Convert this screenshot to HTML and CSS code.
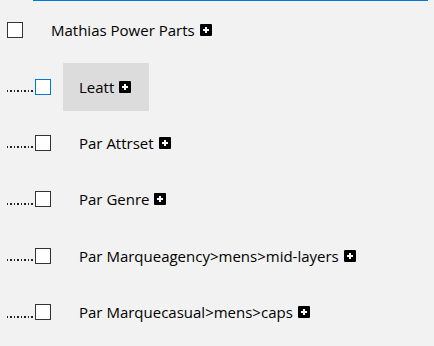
FILE: index.html
```html
<!DOCTYPE html>
<html lang="en">
  <head>
    <meta charset="UTF-8" />
    <meta name="viewport" content="width=device-width, initial-scale=1.0" />
    <title>Catégories</title>
    <link rel="stylesheet" href="styles.css">
  </head>
  <body>
    <div class="topline"></div>
    <ul class="tree">
      <li class="row">
        <span class="box"></span>
        <span class="label">Mathias Power Parts <svg class="plus" viewBox="0 0 12 12"><rect width="12" height="12" rx="1"/><path d="M6 3v6M3 6h6"/></svg></span>
      </li>
      <li class="row">
        <span class="dots"></span>
        <span class="box focus"></span>
        <span class="label hover">Leatt <svg class="plus" viewBox="0 0 12 12"><rect width="12" height="12" rx="1"/><path d="M6 3v6M3 6h6"/></svg></span>
      </li>
      <li class="row">
        <span class="dots"></span>
        <span class="box"></span>
        <span class="label">Par Attrset <svg class="plus" viewBox="0 0 12 12"><rect width="12" height="12" rx="1"/><path d="M6 3v6M3 6h6"/></svg></span>
      </li>
      <li class="row">
        <span class="dots"></span>
        <span class="box"></span>
        <span class="label">Par Genre <svg class="plus" viewBox="0 0 12 12"><rect width="12" height="12" rx="1"/><path d="M6 3v6M3 6h6"/></svg></span>
      </li>
      <li class="row">
        <span class="dots"></span>
        <span class="box"></span>
        <span class="label">Par Marqueagency&gt;mens&gt;mid-layers <svg class="plus" viewBox="0 0 12 12"><rect width="12" height="12" rx="1"/><path d="M6 3v6M3 6h6"/></svg></span>
      </li>
      <li class="row">
        <span class="dots"></span>
        <span class="box"></span>
        <span class="label">Par Marquecasual&gt;mens&gt;caps <svg class="plus" viewBox="0 0 12 12"><rect width="12" height="12" rx="1"/><path d="M6 3v6M3 6h6"/></svg></span>
      </li>
    </ul>
  </body>
</html>
```

FILE: styles.css
```css
body {
  margin: 0;
  background-color: #f2f2f2;
  font-family: "Segoe UI", "Open Sans", sans-serif;
  font-size: 15px;
  color: #000;
}

.topline {
  height: 1px;
  width: 395px;
  margin-left: 33px;
  background-color: #0078d7;
}

.tree {
  list-style: none;
  margin: 1px 0 0 0;
  padding: 0;
}

.row {
  height: 56.4px;
  display: flex;
  align-items: center;
  padding-left: 7px;
}

.dots {
  width: 28px;
  height: 2px;
  margin-top: 9px;
  background-image: repeating-linear-gradient(
    to right,
    #222 0,
    #222 1.5px,
    transparent 1.5px,
    transparent 3.5px
  );
}

.box {
  width: 14px;
  height: 14px;
  border: 1px solid #333;
  background-color: #fff;
}

.box.focus {
  border-color: #0078d7;
}

.label {
  height: 48px;
  margin-left: 12px;
  padding: 0 18px 0 16px;
  display: flex;
  align-items: center;
  white-space: pre;
}

.label.hover {
  background-color: #dcdcdc;
}

.plus {
  width: 12px;
  height: 12px;
  margin-left: 1px;
}

.plus rect {
  fill: #000;
}

.plus path {
  stroke: #fff;
  stroke-width: 2;
}
```
